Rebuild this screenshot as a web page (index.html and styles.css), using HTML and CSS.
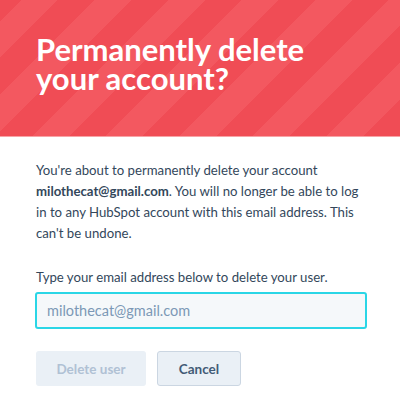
FILE: index.html
```html
<!DOCTYPE html>
<html lang="en">
<head>
    <meta charset="UTF-8">
    <meta name="viewport" content="width=device-width, initial-scale=1.0">
    <title>Delete account</title>
    <link rel="stylesheet" href="styles.css">
</head>
<body>
    <div class="modal">
        <div class="header">
            <h1>Permanently delete your account?</h1>
        </div>
        <div class="content">
            <p class="message">You're about to permanently delete your account <strong>milothecat@gmail.com</strong>. You will no longer be able to log in to any HubSpot account with this email address. This can't be undone.</p>
            <label for="email">Type your email address below to delete your user.</label>
            <input type="text" id="email" placeholder="milothecat@gmail.com">
            <div class="actions">
                <button class="btn btn-delete" disabled>Delete user</button>
                <button class="btn btn-cancel">Cancel</button>
            </div>
        </div>
    </div>
</body>
</html>
```

FILE: styles.css
```css
body {
    margin: 0;
    font-family: Lato, "Noto Sans", sans-serif;
    background: #fff;
    color: #33475b;
}
.header {
    height: 137px;
    box-sizing: border-box;
    padding: 35px 36px 0;
    background: repeating-linear-gradient(-45deg, #f04c55 0, #f04c55 26px, #f35860 26px, #f35860 52px);
    border-bottom: 1px solid #f8a3a6;
}
.header h1 {
    margin: 0;
    width: 320px;
    color: #fff;
    font-size: 31px;
    line-height: 29px;
    font-weight: 700;
}
.content {
    padding: 23px 32px 0 36px;
}
.message {
    margin: 0 0 24px;
    font-size: 13.2px;
    line-height: 21px;
}
label {
    display: block;
    font-size: 13.2px;
    line-height: 18px;
    margin-bottom: 6px;
}
input {
    display: block;
    box-sizing: border-box;
    width: 332px;
    height: 37px;
    margin-left: -1px;
    padding: 0 10px;
    border: 2px solid #2ad6e6;
    border-radius: 3px;
    background: #f5f8fa;
    font-family: inherit;
    font-size: 14.5px;
    color: #33475b;
    outline: none;
}
input::placeholder {
    color: #7c98b6;
}
.actions {
    display: flex;
    gap: 11px;
    margin-top: 22px;
}
.btn {
    height: 35px;
    border-radius: 3px;
    font-family: inherit;
    font-size: 13.5px;
    font-weight: 700;
    cursor: pointer;
}
.btn-delete {
    width: 110px;
    border: none;
    background: #eaf0f6;
    color: #b0c1d4;
}
.btn-cancel {
    width: 84px;
    border: 1px solid #cbd6e2;
    background: #eaf0f6;
    color: #425b76;
}
```
